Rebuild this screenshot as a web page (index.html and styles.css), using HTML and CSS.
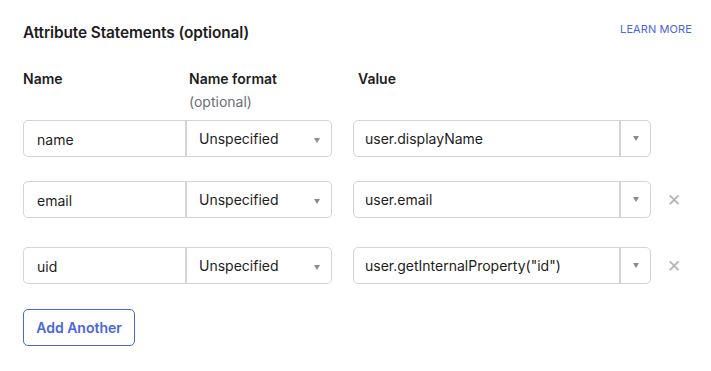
FILE: index.html
```html
<html>

<head>
  <meta charset="UTF-8">
  <title>Attribute Statements</title>
  <link rel="stylesheet" href="styles.css">
</head>

<body>
  <div class="Painel">
    <div class="Topo">
      <h1>Attribute Statements (optional)</h1>
      <a href="#" class="saiba">LEARN MORE</a>
    </div>

    <div class="Cabecalho">
      <div class="colNome">Name</div>
      <div class="colFormato">Name format<span class="opc">(optional)</span></div>
      <div class="colValor">Value</div>
    </div>

    <div class="Linha">
      <div class="campo">name</div>
      <div class="formato">Unspecified<i class="seta"></i></div>
      <div class="valor"><span class="txt">user.displayName</span><span class="btnSeta"><i class="seta"></i></span></div>
      <span class="remover vazio"></span>
    </div>

    <div class="Linha">
      <div class="campo">email</div>
      <div class="formato">Unspecified<i class="seta"></i></div>
      <div class="valor"><span class="txt">user.email</span><span class="btnSeta"><i class="seta"></i></span></div>
      <span class="remover">&#x2715;</span>
    </div>

    <div class="Linha ultima">
      <div class="campo">uid</div>
      <div class="formato">Unspecified<i class="seta"></i></div>
      <div class="valor"><span class="txt">user.getInternalProperty("id")</span><span class="btnSeta"><i class="seta"></i></span></div>
      <span class="remover">&#x2715;</span>
    </div>

    <input type="button" class="adicionar" value="Add Another">
  </div>
</body>

</html>
```

FILE: styles.css
```css
body {
  margin: 0;
  background: #ffffff;
  font-family: Inter, "Noto Sans", Arial, sans-serif;
  color: #1d1d21;
}

.Painel {
  padding: 22px 19px 0 23px;
}

.Topo {
  display: flex;
  justify-content: space-between;
  align-items: flex-start;
  height: 22px;
}

h1 {
  font-size: 15.4px;
  line-height: 22px;
  font-weight: 600;
  margin: 0;
  letter-spacing: -0.1px;
}

.saiba {
  font-size: 11px;
  line-height: 14px;
  color: #4c64e0;
  text-decoration: none;
  letter-spacing: 0.1px;
}

.Cabecalho {
  display: flex;
  margin-top: 26px;
  font-size: 14px;
  font-weight: 600;
  line-height: 17px;
}

.colNome {
  width: 166px;
}

.colFormato {
  width: 169px;
}

.opc {
  display: block;
  font-weight: 400;
  color: #6e6e78;
  margin-top: 6px;
}

.Linha {
  display: flex;
  align-items: center;
  height: 37px;
  margin-top: 24px;
  font-size: 14px;
}

.Cabecalho + .Linha {
  margin-top: 10px;
}

.Linha.ultima {
  margin-top: 29px;
}

.campo {
  box-sizing: border-box;
  width: 164px;
  height: 37px;
  line-height: 37px;
  padding-left: 13px;
  border: 1px solid #d4d4d8;
  border-right-width: 2px;
  border-radius: 5px 0 0 5px;
}

.formato {
  box-sizing: border-box;
  position: relative;
  width: 145px;
  height: 37px;
  line-height: 35px;
  padding-left: 12px;
  border: 1px solid #d4d4d8;
  border-left: 0;
  border-radius: 0 5px 5px 0;
  margin-right: 21px;
}

.formato .seta {
  position: absolute;
  right: 11px;
  top: 17px;
}

.seta {
  display: inline-block;
  width: 0;
  height: 0;
  border-left: 3.5px solid transparent;
  border-right: 3.5px solid transparent;
  border-top: 5px solid #8a8a8f;
}

.valor {
  box-sizing: border-box;
  display: flex;
  width: 298px;
  height: 37px;
  border: 1px solid #d4d4d8;
  border-radius: 5px;
}

.valor .txt {
  flex: 1;
  line-height: 35px;
  padding-left: 11px;
  border-right: 2px solid #d4d4d8;
}

.btnSeta {
  width: 29px;
  display: flex;
  justify-content: center;
  align-items: center;
}

.remover {
  width: 16px;
  margin-left: 15px;
  font-size: 17px;
  color: #b4b4b8;
  text-align: center;
}

.adicionar {
  margin-top: 25px;
  width: 112px;
  height: 37px;
  background: #ffffff;
  border: 1px solid #4c64e0;
  border-radius: 5px;
  color: #4c64e0;
  font-family: Inter, "Noto Sans", Arial, sans-serif;
  font-size: 14px;
  font-weight: 600;
  padding: 0;
}
```
